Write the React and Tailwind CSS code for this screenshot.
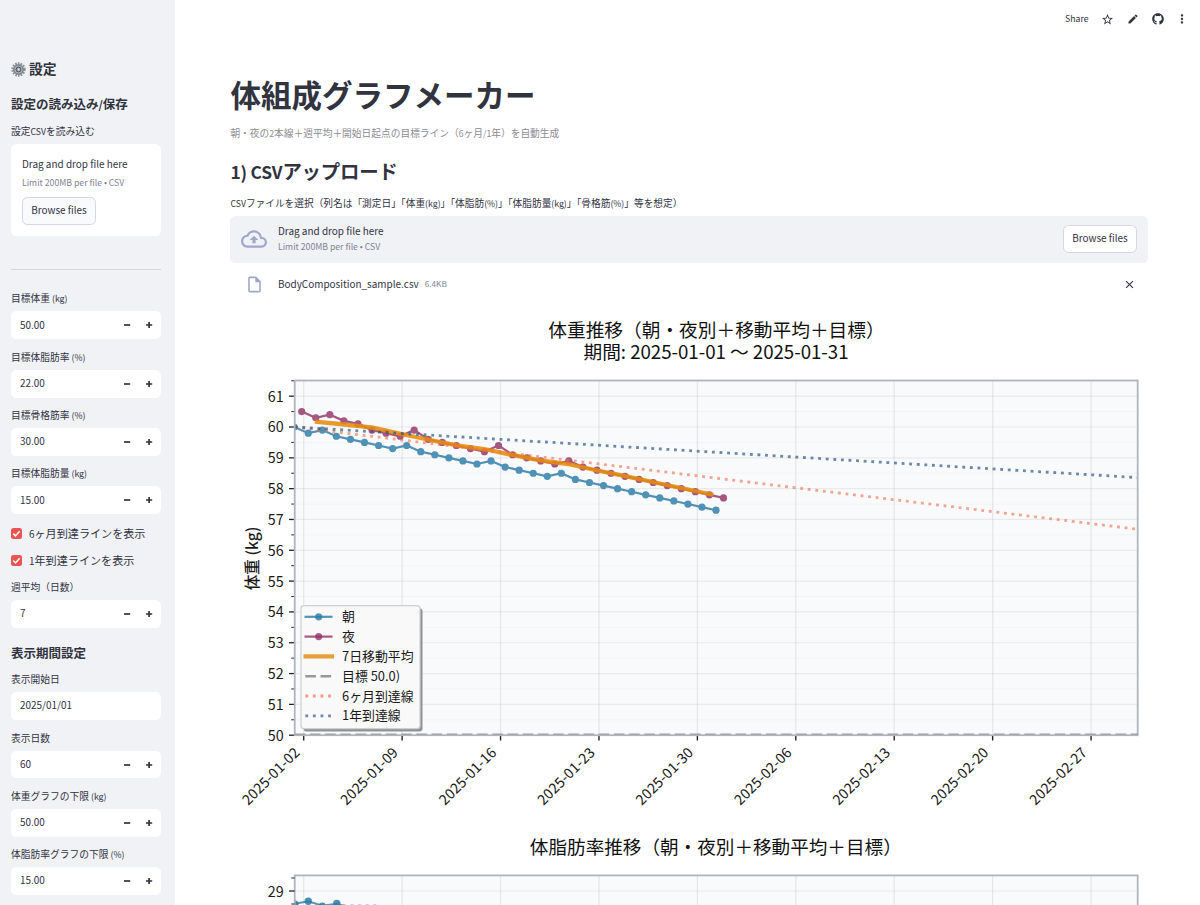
import React from "react";
import { MdStarOutline, MdEdit, MdMoreVert, MdClose, MdOutlineCloudUpload, MdOutlineInsertDriveFile } from "react-icons/md";
import { FaGithub } from "react-icons/fa";

const MORNING = [
  60.0, 59.8, 59.9, 59.7, 59.6, 59.5, 59.4, 59.3, 59.4, 59.2, 59.1, 59.0, 58.9, 58.8, 58.9, 58.7,
  58.6, 58.5, 58.4, 58.5, 58.3, 58.2, 58.1, 58.0, 57.9, 57.8, 57.7, 57.6, 57.5, 57.4, 57.3,
];
const NIGHT = [
  60.5, 60.3, 60.4, 60.2, 60.1, 59.9, 59.8, 59.7, 59.9, 59.6, 59.5, 59.4, 59.3, 59.2, 59.4, 59.1,
  59.0, 58.9, 58.8, 58.9, 58.7, 58.6, 58.5, 58.4, 58.3, 58.2, 58.1, 58.0, 57.9, 57.8, 57.7,
];
const AVERAGE = "317,421.8 345,424.5 373,427.6 406,435 430,440 457,445.3 484,449 511,454.7 540,460.3 568,464 595,470 623,475.7 667,485 711,494.3";
const DATES = [
  "2025-01-02", "2025-01-09", "2025-01-16", "2025-01-23", "2025-01-30",
  "2025-02-06", "2025-02-13", "2025-02-20", "2025-02-27",
];
const LEGEND = [
  { label: "朝", color: "#2a7ca6", width: 2.2, dot: true },
  { label: "夜", color: "#943469", width: 2.2, dot: true },
  { label: "7日移動平均", color: "#e58b0c", width: 4.3 },
  { label: "目標 50.0)", color: "#808488", width: 2.5, dash: "10.6 4.6" },
  { label: "6ヶ月到達線", color: "#f46a48", width: 2.8, dash: "2.87 4.73" },
  { label: "1年到達線", color: "#1f5786", width: 2.8, dash: "2.87 4.73" },
];

const DAY = 14.06;
const tickX = (i) => 303.7 + i * DAY * 7;
const kgY = (kg) => 735.2 - (kg - 50) * 30.82;

// Latin glyphs are drawn a bit smaller than the kana/kanji around them
function Mixed({ children }) {
  return children.split(/([\x20-\x7e]+)/).map((part, i) =>
    i % 2 ? <span key={i} className="text-[0.895em] whitespace-pre">{part}</span> : part
  );
}

function Gear() {
  return (
    <svg viewBox="0 0 28 28" className="h-[15px] w-[15px]">
      <circle cx="14" cy="14" r="11.2" fill="none" stroke="#8b9197" strokeWidth="4.4" strokeDasharray="3 2.03" />
      <circle cx="14" cy="14" r="8.6" fill="#b4b9be" stroke="#80868d" strokeWidth="3" />
      <circle cx="14" cy="14" r="4.6" fill="#9ba2a9" stroke="#454c54" strokeWidth="1.8" />
      <circle cx="14.5" cy="14" r="1.7" fill="#e3e6e9" />
    </svg>
  );
}

function Label({ children }) {
  return (
    <div className="mb-[2.8px] flex h-[16.67px] items-center text-[9.75px] leading-none">
      <span className="relative -top-px"><Mixed>{children}</Mixed></span>
    </div>
  );
}

function Field({ label, value, stepper = true }) {
  return (
    <div>
      <Label>{label}</Label>
      <div className="flex h-[27.8px] items-center rounded-[5.5px] bg-white pl-[9px]">
        <span className="flex-1 pb-[1.6px] text-[9.95px] leading-none">{value}</span>
        {stepper && (
          <>
            <svg viewBox="0 0 8 8" className="mr-[14px] h-2 w-2"><path d="M1 4h6.2" stroke="#31333f" strokeWidth="1.7" /></svg>
            <svg viewBox="0 0 8 8" className="mr-[8px] h-2 w-2"><path d="M1 4h6.2M4.1 1v6" stroke="#31333f" strokeWidth="1.7" /></svg>
          </>
        )}
      </div>
    </div>
  );
}

function Check({ children }) {
  return (
    <div className="flex h-[16.7px] items-center gap-[7px] pb-[1.2px] text-[11.1px] leading-none">
      <svg viewBox="0 0 11 11" className="h-[11px] w-[11px] rounded-[2.5px] bg-[#ea5351]">
        <path d="M2.3 5.6l2.2 2.2 4.2-4.5" fill="none" stroke="#fff" strokeWidth="1.5" />
      </svg>
      <span><Mixed>{children}</Mixed></span>
    </div>
  );
}

function BrowseButton({ className = "" }) {
  return (
    <button type="button" className={`h-[28px] w-[74px] rounded-[5.5px] border border-[#d6d7dc] pb-[1.5px] text-[9.95px] leading-none ${className}`}>
      Browse files
    </button>
  );
}

function Sidebar() {
  return (
    <aside className="h-[905px] w-[175px] flex-none overflow-hidden bg-[#f0f2f6] pl-[11px] pr-[14px]">
      <h2 className="mt-[58.5px] flex h-[21px] items-center gap-[3px] text-[13.8px] font-semibold leading-none">
        <Gear />設定
      </h2>
      <h3 className="mt-[14.5px] flex h-[20px] items-center text-[12.5px] font-semibold leading-none">
        <span><Mixed>設定の読み込み/保存</Mixed></span>
      </h3>
      <div className="mt-[10.5px]">
        <Label>設定CSVを読み込む</Label>
        <div className="flex h-[92px] flex-col rounded-[5.5px] bg-white px-[11px] pt-[11px]">
          <span className="text-[9.95px] leading-[18px]">Drag and drop file here</span>
          <span className="text-[8.7px] leading-[19px] text-[#808495]">Limit 200MB per file • CSV</span>
          <BrowseButton className="mt-[5px] bg-[#f9fafc]" />
        </div>
      </div>
      <hr className="mt-[33px] border-[#d5d7de]" />
      <div className="mt-[22px] flex flex-col gap-[11.1px]">
        <Field label="目標体重 (kg)" value="50.00" />
        <Field label="目標体脂肪率 (%)" value="22.00" />
        <Field label="目標骨格筋率 (%)" value="30.00" />
        <Field label="目標体脂肪量 (kg)" value="15.00" />
        <Check>6ヶ月到達ラインを表示</Check>
        <Check>1年到達ラインを表示</Check>
        <Field label="週平均（日数）" value="7" />
      </div>
      <h3 className="mt-[15.5px] flex h-[20px] items-center text-[12.5px] font-semibold leading-none">表示期間設定</h3>
      <div className="mt-[9.2px] flex flex-col gap-[11.1px]">
        <Field label="表示開始日" value="2025/01/01" stepper={false} />
        <Field label="表示日数" value="60" />
        <Field label="体重グラフの下限 (kg)" value="50.00" />
        <Field label="体脂肪率グラフの下限 (%)" value="15.00" />
      </div>
    </aside>
  );
}

function Series({ values, start, color }) {
  const points = values.map((v, i) => [start + i * DAY, kgY(v)]);
  return (
    <g opacity="0.82">
      <polyline points={points.join(" ")} fill="none" stroke={color} strokeWidth="2.2" />
      {points.map(([x, y]) => <circle key={x} cx={x} cy={y} r="3.6" fill={color} />)}
    </g>
  );
}

function WeightChart() {
  const ticks = Array.from({ length: 12 }, (_, i) => 50 + i);
  return (
    <svg viewBox="230 310 918 510" className="block h-[510px] w-[918px] flex-none" fill="#1a1a1a">
      <clipPath id="weight"><rect x="294.7" y="380.5" width="843" height="355" /></clipPath>
      <g fontSize="18.7" textAnchor="middle" fill="#111">
        <text x="716.5" y="337">体重推移（朝・夜別＋移動平均＋目標）</text>
        <text x="716" y="359" textLength="265">期間: 2025-01-01 〜 2025-01-31</text>
      </g>
      <rect x="294.7" y="380.5" width="843" height="354.7" fill="#f8fafc" />
      {ticks.map((t) => (
        <g key={t}>
          <path d={`M295 ${kgY(t)}H1138`} stroke="#808080" strokeOpacity="0.13" strokeWidth="1.2" />
          <path d={`M295 ${kgY(t + 0.5)}H1138`} stroke="#808080" strokeOpacity="0.05" />
          <path d={`M289 ${kgY(t)}h5.5`} stroke="#222" strokeWidth="1.3" />
          <path d={`M291.3 ${kgY(t + 0.5)}h3.2`} stroke="#222" />
          <text x="283.7" y={kgY(t) + 5.4} textAnchor="end" fontSize="14.3">{t}</text>
        </g>
      ))}
      {DATES.map((d, i) => (
        <g key={d}>
          <path d={`M${tickX(i)} 381V735`} stroke="#808080" strokeOpacity="0.15" strokeWidth="1.3" />
          <path d={`M${tickX(i)} 736v4.5`} stroke="#222" strokeWidth="1.4" />
          <text fontSize="14.3" textAnchor="end" textLength="74" transform={`translate(${tickX(i) - 3.2} 753.6) rotate(-45)`}>{d}</text>
        </g>
      ))}
      <g clipPath="url(#weight)" fill="none">
        <Series values={MORNING} start={294.2} color="#2a7ca6" />
        <Series values={NIGHT} start={301.7} color="#943469" />
        <polyline points={AVERAGE} stroke="#e58b0c" strokeOpacity="0.88" strokeWidth="4.3" strokeLinecap="square" />
        <path d="M294.7 427L1138 529.3" stroke="#f46a48" strokeOpacity="0.6" strokeWidth="2.8" strokeDasharray="2.87 4.73" />
        <path d="M294.7 427L1138 477.6" stroke="#1f4e79" strokeOpacity="0.65" strokeWidth="2.8" strokeDasharray="2.87 4.73" />
      </g>
      <rect x="294.7" y="380.5" width="843" height="354.7" fill="none" stroke="#b0b5bc" strokeWidth="1.8" />
      <path d="M294.7 734.2H1138" stroke="#909399" strokeOpacity="0.6" strokeWidth="1.8" strokeDasharray="10.6 4.6" />
      <text fontSize="15.6" fontWeight="500" textAnchor="middle" transform="translate(258.3 558.5) rotate(-90)">体重 (kg)</text>

      <rect x="303.5" y="608.5" width="119" height="123" rx="3" fill="#8f9296" />
      <rect x="301" y="605.7" width="119" height="123" rx="3" fill="#f9f9f9" stroke="#cfcfcf" strokeWidth="1.2" />
      {LEGEND.map((item, i) => {
        const y = 616.8 + i * 19.8;
        return (
          <g key={item.label}>
            <path
              d={item.dot ? `M304.5 ${y}h28` : item.dash ? `M305.3 ${y}h27` : `M303.5 ${y}h30.5`}
              stroke={item.color} strokeOpacity={item.dash && !item.label.startsWith("目") ? 0.65 : 0.82}
              strokeWidth={item.width} strokeDasharray={item.dash}
            />
            {item.dot && <circle cx="318.7" cy={y} r="3.6" fill={item.color} fillOpacity="0.8" />}
            <text x="342" y={y + 4.6} fontSize="12.9">{item.label}</text>
          </g>
        );
      })}
    </svg>
  );
}

function FatChart() {
  return (
    <svg viewBox="230 820 918 85" className="block h-[85px] w-[918px] flex-none" fill="#1a1a1a">
      <text x="715.8" y="853.6" fontSize="18.6" textAnchor="middle" fill="#111">体脂肪率推移（朝・夜別＋移動平均＋目標）</text>
      <rect x="294.7" y="875.4" width="843" height="60" fill="#f8fafc" />
      <path d="M295 891H1138" stroke="#808080" strokeOpacity="0.13" strokeWidth="1.2" />
      {DATES.map((d, i) => (
        <path key={d} d={`M${tickX(i)} 876v40`} stroke="#808080" strokeOpacity="0.15" strokeWidth="1.3" />
      ))}
      <g fill="#2a7ca6" fillOpacity="0.85">
        <path d="M294.7 903.7L308.3 901.3L322.3 905.7L336.8 903.7L351 908" fill="none" stroke="#2a7ca6" strokeOpacity="0.8" strokeWidth="2" />
        <path d="M295 900.3a3.7 3.7 0 0 1 3.5 4.7h-3.5z" />
        <circle cx="308.3" cy="901.3" r="3.7" />
        <circle cx="322.3" cy="906.3" r="3.7" />
        <circle cx="336.8" cy="903.5" r="3.7" />
      </g>
      <path d="M343 905H380" stroke="#1f4e79" strokeOpacity="0.5" strokeDasharray="2.87 4.73" />
      <rect x="294.7" y="875.4" width="843" height="60" fill="none" stroke="#b0b5bc" strokeWidth="1.8" />
      <path d="M289 891h5.5" stroke="#222" strokeWidth="1.3" />
      <path d="M291.3 878h3.2M291.3 904h3.2" stroke="#222" />
      <text x="283.7" y="896.6" textAnchor="end" fontSize="14.3">29</text>
    </svg>
  );
}

export default function App() {
  return (
    <div className="flex h-[905px] w-[1200px] overflow-hidden bg-white font-['Noto_Sans_CJK_JP',sans-serif] text-[#31333f]">
      <Sidebar />
      <main className="h-[905px] flex-1 overflow-hidden">
        <header className="flex h-[38px] items-center justify-end pr-[11.5px]">
          <span className="mr-[12.5px] text-[8.7px] leading-none">Share</span>
          <MdStarOutline className="mr-[12.5px] h-[13px] w-[13px]" />
          <MdEdit className="mr-[13px] h-[12px] w-[12px]" />
          <FaGithub className="mr-[11px] h-[12px] w-[12px]" />
          <MdMoreVert className="h-[14px] w-[14px]" />
        </header>
        <div className="ml-[55.4px] flex w-[917.6px] flex-col">
          <h1 className="mt-[36px] h-[40px] text-[30.5px] font-bold leading-[40px]">体組成グラフメーカー</h1>
          <p className="mt-[11px] h-[16px] text-[9.72px] leading-[16px] text-[#8b8c93]"><Mixed>朝・夜の2本線＋週平均＋開始日起点の目標ライン（6ヶ月/1年）を自動生成</Mixed></p>
          <h2 className="mt-[17px] h-[26px] text-[19.4px] font-semibold leading-[26px] tracking-[-0.01em]"><Mixed>1) CSVアップロード</Mixed></h2>
          <p className="mt-[11px] h-[16px] text-[9.7px] leading-[16px]"><Mixed>CSVファイルを選択（列名は「測定日」「体重(kg)」「体脂肪(%)」「体脂肪量(kg)」「骨格筋(%)」等を想定）</Mixed></p>
          <div className="mt-[5px] flex h-[47px] items-center rounded-[5.5px] bg-[#f0f2f6] px-[11px] pb-[1.5px]">
            <MdOutlineCloudUpload className="h-[26px] w-[26px] text-[#9fa8c8]" />
            <div className="ml-[10.6px] flex flex-1 flex-col">
              <span className="text-[9.95px] leading-[16px]">Drag and drop file here</span>
              <span className="text-[8.7px] leading-[15px] text-[#808495]">Limit 200MB per file • CSV</span>
            </div>
            <BrowseButton className="bg-white" />
          </div>
          <div className="flex h-[47px] items-center pb-[4px] pl-[15px] pr-[12px]">
            <MdOutlineInsertDriveFile className="h-[19px] w-[19px] text-[#9fa8c8]" />
            <span className="ml-[13.6px] pb-[2px] text-[9.95px] leading-none">BodyComposition_sample.csv</span>
            <span className="ml-[6px] flex-1 pb-[2px] text-[8.2px] leading-none text-[#808495]">6.4KB</span>
            <MdClose className="h-[13px] w-[13px]" />
          </div>
          <WeightChart />
          <FatChart />
        </div>
      </main>
    </div>
  );
}
